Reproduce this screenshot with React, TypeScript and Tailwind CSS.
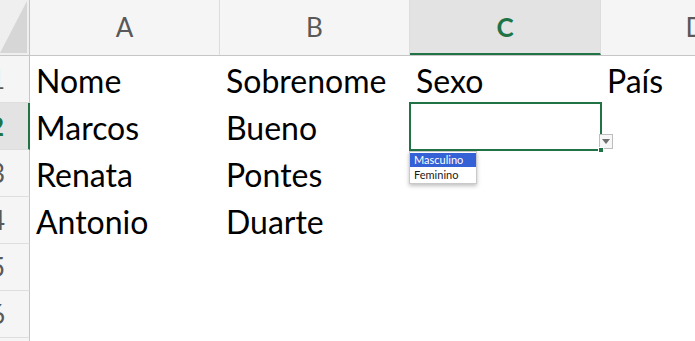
import React from 'react';

const columns = ['A', 'B', 'C', 'D'];
const selectedCol = 'C';
const selectedRow = 2;

const rows: string[][] = [
  ['Nome', 'Sobrenome', 'Sexo', 'País'],
  ['Marcos', 'Bueno', '', ''],
  ['Renata', 'Pontes', '', ''],
  ['Antonio', 'Duarte', '', ''],
  ['', '', '', ''],
  ['', '', '', ''],
  ['', '', '', ''],
];

const colWidth = ['w-[190px]', 'w-[190px]', 'w-[191px]', 'w-[190px]'];

// the little validation list that opens under the selected cell
const DropdownList = () => (
  <div className="absolute -left-[1px] top-[48px] z-20 w-[68px] border border-[#c9c9c9] bg-white py-[1px] shadow-[0_2px_4px_rgba(0,0,0,0.25)]">
    <div className="h-[14px] bg-[#3461d6] pl-[4px] text-[11px] leading-[14px] text-white">Masculino</div>
    <div className="h-[15px] pl-[4px] text-[11px] leading-[15px] text-[#1a1a1a]">Feminino</div>
  </div>
);

const SelectedCell = () => (
  <>
    <div className="pointer-events-none absolute -left-[1px] -top-[1px] -right-[1px] -bottom-[1px] z-10 border-2 border-[#217346]" />
    <div className="absolute -right-[3px] -bottom-[3px] z-20 h-[6px] w-[6px] border border-white bg-[#217346]" />
    <div className="absolute -right-[12px] bottom-[1px] z-10 flex h-[15px] w-[14px] items-center justify-center border border-[#bdbdbd] bg-[#f7f7f7]">
      <svg width="8" height="5" viewBox="0 0 8 5">
        <path d="M0 0 L8 0 L4 5 Z" fill="#6f6f6f" />
      </svg>
    </div>
    <DropdownList />
  </>
);

export default function App() {
  return (
    <div
      className="relative h-[341px] w-[695px] overflow-hidden bg-white"
      style={{ fontFamily: 'Lato, "Liberation Sans", sans-serif' }}
    >
      {/* column headers */}
      <div className="flex h-[56px] border-b border-[#c6c6c6]">
        <div className="relative w-[30px] shrink-0 border-r border-[#c6c6c6] bg-[#efefef]">
          <svg className="absolute bottom-[2px] right-[2px]" width="27" height="52" viewBox="0 0 27 52">
            <path d="M27 0 L27 52 L0 52 Z" fill="#d6d6d6" />
          </svg>
        </div>
        {columns.map((c, i) => (
          <div
            key={c}
            className={`${colWidth[i]} flex shrink-0 items-center justify-center border-r border-[#dcdcdc] text-[26px] ${
              c === selectedCol
                ? 'border-b-2 border-b-[#217346] bg-[#e3e3e3] pt-[2px] font-bold text-[#217346]'
                : 'bg-[#f5f5f5] text-[#595959]'
            }`}
          >
            {c}
          </div>
        ))}
      </div>

      {/* data rows */}
      {rows.map((row, r) => {
        const n = r + 1;
        const isSelRow = n === selectedRow;
        return (
          <div key={n} className="flex h-[47px]">
            <div
              className={`flex w-[30px] shrink-0 items-center justify-end overflow-hidden border-b border-[#dedede] pr-[24px] text-[26px] ${
                isSelRow
                  ? 'border-r-2 border-r-[#217346] bg-[#e3e3e3] font-bold text-[#217346]'
                  : 'border-r border-r-[#c6c6c6] bg-[#f5f5f5] text-[#595959]'
              }`}
            >
              {n}
            </div>
            {row.map((val, ci) => {
              const isSel = isSelRow && columns[ci] === selectedCol;
              return (
                <div
                  key={ci}
                  className={`${colWidth[ci]} relative flex shrink-0 items-center whitespace-nowrap pl-[6px] pt-[3px] text-[32px] leading-none text-black`}
                >
                  {val}
                  {isSel && <SelectedCell />}
                </div>
              );
            })}
          </div>
        );
      })}
    </div>
  );
}
